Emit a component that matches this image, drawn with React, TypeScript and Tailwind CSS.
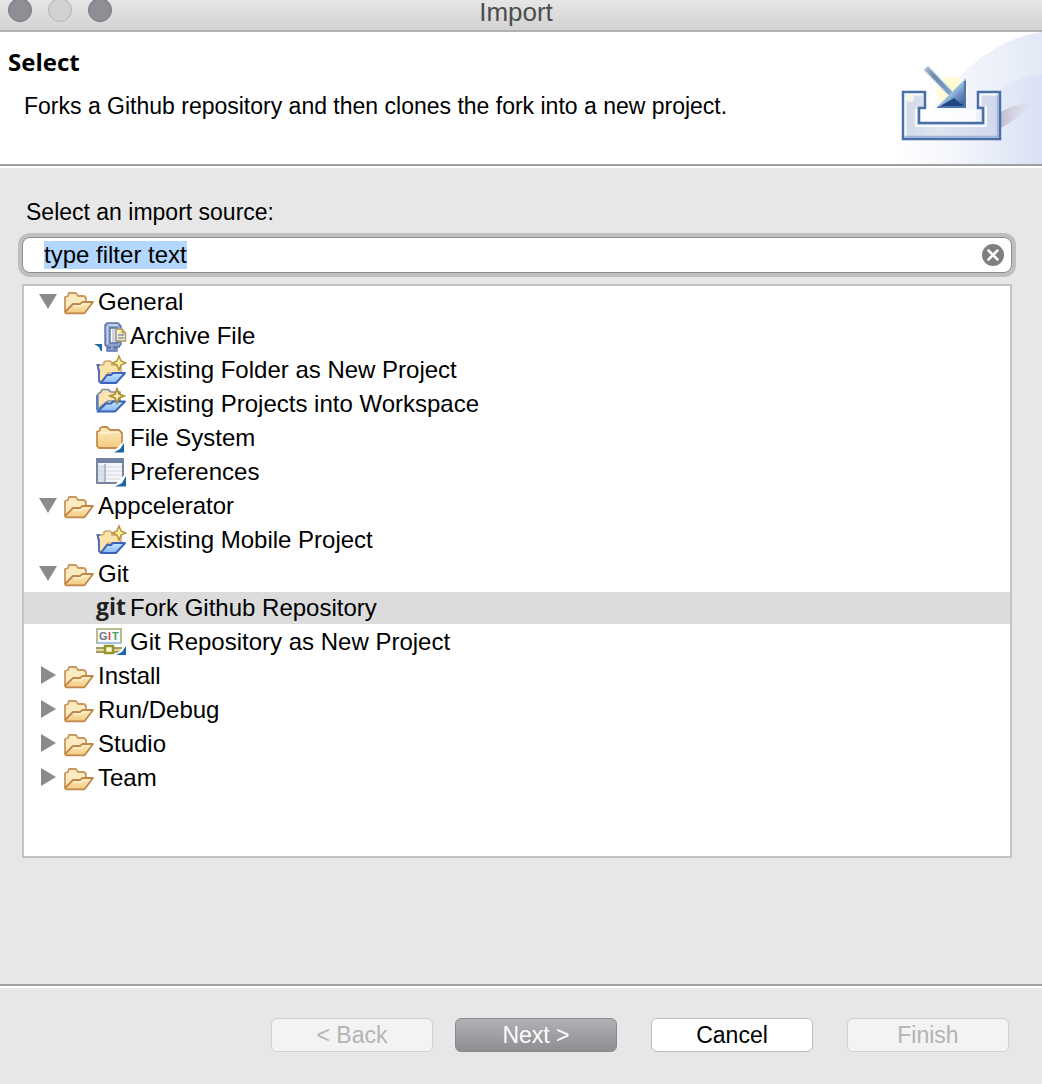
import { useEffect, useRef, useState, type ReactNode } from "react";

type IconName = "folder" | "archive" | "newFolder" | "projects" | "fileSystem" | "preferences" | "git" | "gitRepo";
type Leaf = { label: string; icon: IconName };
type Group = { label: string; open: boolean; children: Leaf[] };

const GROUPS: Group[] = [
  {
    label: "General",
    open: true,
    children: [
      { label: "Archive File", icon: "archive" },
      { label: "Existing Folder as New Project", icon: "newFolder" },
      { label: "Existing Projects into Workspace", icon: "projects" },
      { label: "File System", icon: "fileSystem" },
      { label: "Preferences", icon: "preferences" },
    ],
  },
  { label: "Appcelerator", open: true, children: [{ label: "Existing Mobile Project", icon: "newFolder" }] },
  {
    label: "Git",
    open: true,
    children: [
      { label: "Fork Github Repository", icon: "git" },
      { label: "Git Repository as New Project", icon: "gitRepo" },
    ],
  },
  { label: "Install", open: false, children: [] },
  { label: "Run/Debug", open: false, children: [] },
  { label: "Studio", open: false, children: [] },
  { label: "Team", open: false, children: [] },
];

const drawings: Record<IconName, ReactNode> = {
  folder: (
    <>
      <path d="M3 26 V11 L6 10 L7 7 H14 L16 10 H22 L24 12 V16" fill="#fbe9c0" stroke="#c99860" strokeWidth="1.800" strokeLinejoin="round" />
      <path d="M3 26 L11 18 H18 L20.500 16 H31 L22.500 27.300 H4 Z" fill="url(#sand)" stroke="#c08848" strokeWidth="1.800" strokeLinejoin="round" />
      <path d="M11.500 20 H19 L21 18 H27" fill="none" stroke="#fff0cc" strokeWidth="1.500" />
    </>
  ),
  archive: (
    <>
      <path d="M11 5 L13 3 H24 L27 6 V10 H23 V8 H16 V23 H23 V22 H27 V24 L25 27 H20 V28 H23 V31 H13 V28 H16 V27 H13 L11 25 Z" fill="#8ba2ca" stroke="#5b74a8" strokeWidth="1.400" />
      <path d="M13.500 6 V24 M14 5 H24" fill="none" stroke="#c2d0e8" strokeWidth="1.800" />
      <path d="M18 9 H22 V22 H18 Z" fill="#cdd6e6" />
      <path d="M22 9 H28 L31.500 13 V21 H22 Z" fill="#f6ecc4" stroke="#a99a68" strokeWidth="1.500" />
      <path d="M28 9 V13 H31.500" fill="#d9b366" stroke="#b59347" />
      <path d="M24 15 H30 M24 18 H30" fill="none" stroke="#7f95bd" strokeWidth="1.500" />
      <path d="M0 24 H8 V31.500 L6 30 L5 27 Z" fill="#1f679e" />
    </>
  ),
  newFolder: (
    <>
      <path d="M4 11 H8 L10 10 V8 L12 7 H16 L18 9 V11 H27 V19 H14 L7 28 L5 26 Z" fill="#fbe3aa" stroke="#cda66f" strokeWidth="1.500" />
      <path d="M2.500 11 H6 M4 12 V14 L5 16 V27 L7 29" fill="none" stroke="#5570b4" strokeWidth="2" />
      <path d="M7 29 L13 21 H17 L19 19 H31 L22 29 Z" fill="url(#sky)" stroke="#3d62bd" strokeWidth="1.900" strokeLinejoin="round" />
      <path d="M25 2 L27 7 L31.500 9 L27 11 L25 16 L23 11 L18.500 9 L23 7 Z" fill="#fff3ac" stroke="#b6942f" strokeWidth="1.500" />
    </>
  ),
  projects: (
    <>
      <path d="M4 21 V6 L7 4 L8 1.500 H14 L17 4 H26 V13 H14 Z" fill="#fbe5b3" stroke="#8490a2" strokeWidth="1.700" strokeLinejoin="round" />
      <path d="M3 7 V22" stroke="#5b80bf" strokeWidth="2" />
      <path d="M3.500 23.500 L12 15.500 H17 L19 13.500 H31 L21 23.500 Z" fill="url(#sky)" stroke="#3d62b6" strokeWidth="1.900" strokeLinejoin="round" />
      <path d="M23 1 L25 6 L30 8 L25 10 L23 15 L21 10 L16 8 L21 6 Z" fill="#fff1a8" stroke="#b08d38" strokeWidth="1.800" />
    </>
  ),
  fileSystem: (
    <>
      <path d="M3 24 V10 L6 8 V6 L8 5 H13 L16 8 H25 L28 11 V23 L26 26 H5 Z" fill="url(#sand)" stroke="#c48d50" strokeWidth="1.800" strokeLinejoin="round" />
      <path d="M5 11 H14 L16 10 H25" fill="none" stroke="#fff1cb" strokeWidth="2" />
      <path d="M32 17 V32 H17 Z" fill="#fff" />
      <path d="M30 21 V30.500 H20 L26 27 Z" fill="#1766a5" />
    </>
  ),
  preferences: (
    <>
      <path d="M3 3 H29 V27 H3 Z" fill="#f3f4f7" stroke="#78859e" strokeWidth="2" />
      <path d="M3 3 H29 V7 H3 Z" fill="#7183a5" />
      <path d="M4 9 H11 V26 H4 Z" fill="#dde3ed" />
      <path d="M4 11 H28 M4 15 H28 M4 19 H28 M4 23 H28" stroke="#d3d7df" strokeWidth="1.200" />
      <path d="M11 8 V26" stroke="#a3adc0" strokeWidth="1.500" />
      <path d="M33 16 V32 H18 Z" fill="#fff" />
      <path d="M32 20 V30.500 H21 L28 27 Z" fill="#1766a5" />
    </>
  ),
  git: (
    <text x="2" y="23" fontFamily="'Open Sans', sans-serif" fontSize="23" fontWeight="700" fill="#222">
      git
    </text>
  ),
  gitRepo: (
    <>
      <path d="M3 3 H27 V17 H3 Z" fill="#f5faff" stroke="#b9bb92" strokeWidth="2" />
      <path d="M3 17 H27" stroke="#a7c1e2" strokeWidth="2" />
      <g fontFamily="'Liberation Sans', sans-serif" fontSize="11" fontWeight="700">
        <text x="5" y="14" fill="#777">G</text>
        <text x="14" y="14" fill="#d34d55">I</text>
        <text x="18" y="14" fill="#4aa866">T</text>
      </g>
      <path d="M2 22 H28 M2 26 H26" stroke="#a79b66" strokeWidth="1.800" />
      <path d="M2 24 H28" stroke="#e2d6a2" strokeWidth="2" />
      <path d="M11 20 H19 V27 H11 Z" fill="#fffbd0" stroke="#94942c" strokeWidth="2.500" />
      <path d="M33 18 V30 H20 Z" fill="#fff" />
      <path d="M32 20 V29 H22 L28 26 Z" fill="#1766a5" />
    </>
  ),
};

function Icon({ name }: { name: IconName }) {
  return (
    <svg viewBox="0 0 32 32" className="size-8 shrink-0 overflow-visible" aria-hidden="true">
      <defs>
        <linearGradient id="sand" x1="0" y1="0" x2="0" y2="1">
          <stop offset="0" stopColor="#fdecc0" />
          <stop offset="1" stopColor="#f3cb80" />
        </linearGradient>
        <linearGradient id="sky" x1="0" y1="0" x2="0" y2="1">
          <stop offset="0" stopColor="#c8e6ff" />
          <stop offset="1" stopColor="#84b6f4" />
        </linearGradient>
      </defs>
      {drawings[name]}
    </svg>
  );
}

function Disclosure({ open }: { open: boolean }) {
  return (
    <svg viewBox="0 0 22 32" className="h-8 w-[22px] shrink-0 overflow-visible" aria-hidden="true">
      <path d={open ? "M-1 8 H17 L8 23 Z" : "M1 6 L16 15 L1 24 Z"} fill="#8b8b8b" />
    </svg>
  );
}

function Banner() {
  return (
    <svg viewBox="0 0 150 132" className="h-[132px] w-[150px] shrink-0" aria-hidden="true">
      <defs>
        <linearGradient id="sweep" x1="0" x2="1">
          <stop offset="0" stopColor="#fff" />
          <stop offset="0.500" stopColor="#f2f5fb" />
          <stop offset="1" stopColor="#e2e9f6" />
        </linearGradient>
        <linearGradient id="sweepInner" x1="0" x2="1">
          <stop offset="0" stopColor="#e8edf8" stopOpacity="0" />
          <stop offset="1" stopColor="#d9e1f4" />
        </linearGradient>
        <linearGradient id="tray" x1="0" y1="0" x2="1" y2="0">
          <stop offset="0" stopColor="#d2daea" />
          <stop offset="0.350" stopColor="#dde5ef" />
          <stop offset="1" stopColor="#d2d8ec" />
        </linearGradient>
        <linearGradient id="head" x1="0" y1="0" x2="1" y2="1">
          <stop offset="0.450" stopColor="#a9d0ee" />
          <stop offset="0.700" stopColor="#6688ba" />
          <stop offset="1" stopColor="#254b8b" />
        </linearGradient>
        <linearGradient id="shaft" gradientUnits="userSpaceOnUse" x1="34" y1="36" x2="60" y2="62">
          <stop offset="0" stopColor="#a9b6c6" />
          <stop offset="0.300" stopColor="#6b89ad" />
          <stop offset="1" stopColor="#7ba2c8" />
        </linearGradient>
        <linearGradient id="shade" x1="0" x2="1">
          <stop offset="0" stopColor="#c3bccd" />
          <stop offset="1" stopColor="#e5dfec" stopOpacity="0.200" />
        </linearGradient>
        <radialGradient id="glow">
          <stop offset="0" stopColor="#fff8bd" />
          <stop offset="1" stopColor="#fffce4" />
        </radialGradient>
      </defs>
      <path d="M0 132 C28 96 70 12 150 0 V132 Z" fill="url(#sweep)" />
      <path d="M60 132 C78 78 110 44 150 43 V132 Z" fill="url(#sweepInner)" />
      <path d="M109 80 Q122 72 142 70 Q128 86 109 96 Z" fill="url(#shade)" />
      <circle cx="60" cy="60" r="16" fill="url(#glow)" />
      <path d="M27 77 H84 V90 H27 Z" fill="#fff" opacity="0.700" />
      <path
        d="M11 60 H33 V76 H27 V91 H91 V76 H86 V60 H108 V107 H11 Z"
        fill="url(#tray)"
        stroke="#4a6fa5"
        strokeWidth="2.500"
      />
      <path d="M13.500 105 V62.500 H30.500 M24 77 V94 H94 V74 M88.500 74 V62.500 H105" fill="none" stroke="#f5f8fd" strokeWidth="2" />
      <path d="M13 104.800 H105.800 V63" fill="none" stroke="#9db5da" strokeWidth="2" />
      <circle cx="18" cy="66" r="4" fill="#fffde0" opacity="0.800" />
      <path d="M34 36 L58 61" stroke="#d5dfea" strokeWidth="7" />
      <path d="M34 36 L59 62" stroke="url(#shaft)" strokeWidth="4.500" />
      <path d="M74 46 V76 H44 Z" fill="url(#head)" />
      <path d="M45 76 L62 66 L74 76 Z" fill="#234783" />
      <path d="M73 49 V75 H46" fill="none" stroke="#5375ae" strokeWidth="2" />
    </svg>
  );
}

export default function App() {
  const filter = useRef<HTMLInputElement>(null);
  const [groups, setGroups] = useState(GROUPS);
  const [selected, setSelected] = useState("Fork Github Repository");

  useEffect(() => {
    filter.current?.focus();
    filter.current?.select();
  }, []);

  const toggle = (label: string) =>
    setGroups((all) => all.map((g) => (g.label === label ? { ...g, open: !g.open } : g)));

  return (
    <div className="flex min-h-screen flex-col bg-[#e7e7e7] font-['Liberation_Sans',Arial,sans-serif] text-[23px] text-black">
      <header className="flex h-8 shrink-0 items-start border-b-2 border-[#b1b1b1] bg-linear-to-b from-[#e6e6e6] to-[#d2d2d2] pr-[10px]">
        <div className="-mt-[2px] flex flex-1 gap-4 pl-2">
          <button aria-label="Close" className="size-6 rounded-full border border-[#77767c] bg-[#8f8e94]" />
          <button aria-label="Minimize" className="size-6 rounded-full border border-[#b4b4b4] bg-[#d2d2d2]" />
          <button aria-label="Zoom" className="size-6 rounded-full border border-[#77767c] bg-[#8f8e94]" />
        </div>
        <h1 className="text-[26px] leading-6 text-[#4d4d4d]">Import</h1>
        <div className="flex-1 pl-2" />
      </header>

      <section className="flex shrink-0 justify-between border-b-2 border-[#a0a0a0] bg-white">
        <div className="pt-[14px] pl-2">
          <h2 className="font-['Open_Sans',sans-serif] text-[24px] leading-8 font-bold">Select</h2>
          <p className="mt-3 pl-4 leading-8">Forks a Github repository and then clones the fork into a new project.</p>
        </div>
        <Banner />
      </section>

      <main className="flex flex-1 flex-col border-t-2 border-white pt-7 pr-[30px] pb-[126px] pl-[22px]">
        <label htmlFor="filter" className="pl-1 leading-8">
          Select an import source:
        </label>
        <div className="mt-[9px] flex h-9 items-center rounded-lg border border-[#8e8e91] bg-white pr-[7px] ring-4 ring-[#bfbfc1]">
          <input
            id="filter"
            ref={filter}
            defaultValue="type filter text"
            className="h-7 min-w-0 flex-1 bg-transparent pl-[21px] text-[24px] leading-7 outline-none selection:bg-[#b3d7ff] selection:text-black"
          />
          <button aria-label="Clear filter" className="size-[22px]" onClick={() => filter.current && (filter.current.value = "")}>
            <svg viewBox="0 0 22 22" className="size-full" aria-hidden="true">
              <circle cx="11" cy="11" r="11" fill="#7f7f7f" />
              <path d="M6.500 6.500 L15.500 15.500 M15.500 6.500 L6.500 15.500" stroke="#fff" strokeWidth="2.500" strokeLinecap="round" />
            </svg>
          </button>
        </div>

        <ul role="tree" aria-label="Import sources" className="mt-[11px] flex flex-1 flex-col gap-[2px] border-2 border-[#c3c3c3] bg-white text-[24px] leading-8">
          {groups.map((g) => (
            <li key={g.label} role="treeitem" aria-expanded={g.open}>
              <button className="flex h-8 w-full items-center pl-4 text-left" onClick={() => toggle(g.label)}>
                <Disclosure open={g.open} />
                <Icon name="folder" />
                <span className="pl-1">{g.label}</span>
              </button>
              {g.open && g.children.length > 0 && (
                <ul role="group" className="mt-[2px] flex flex-col gap-[2px]">
                  {g.children.map((c) => (
                    <li key={c.label} role="treeitem" aria-selected={selected === c.label}>
                      <button
                        onClick={() => setSelected(c.label)}
                        className={
                          selected === c.label
                            ? "flex h-8 w-full items-center bg-[#dcdcdc] pl-[70px] text-left"
                            : "flex h-8 w-full items-center pl-[70px] text-left"
                        }
                      >
                        <Icon name={c.icon} />
                        <span className="pl-1">{c.label}</span>
                      </button>
                    </li>
                  ))}
                </ul>
              )}
            </li>
          ))}
        </ul>
      </main>

      <footer className="shrink-0 border-t-2 border-[#a0a0a0]">
        <div className="flex justify-end border-t-2 border-white pt-[30px] pr-[33px] pb-8 leading-8">
          <button disabled className="h-[34px] w-[162px] rounded-md border border-[#d2d2d2] bg-[#f3f3f3] text-[#b4b4b4]">
            &lt; Back
          </button>
          <button className="ml-[22px] h-[34px] w-[162px] rounded-md border border-[#89888d] bg-linear-to-b from-[#b2b1b6] to-[#8e8d92] text-white">
            Next &gt;
          </button>
          <button className="ml-[34px] h-[34px] w-[162px] rounded-md border border-[#bebebe] bg-white">Cancel</button>
          <button disabled className="ml-[34px] h-[34px] w-[162px] rounded-md border border-[#d2d2d2] bg-[#f3f3f3] text-[#b4b4b4]">
            Finish
          </button>
        </div>
      </footer>
    </div>
  );
}
